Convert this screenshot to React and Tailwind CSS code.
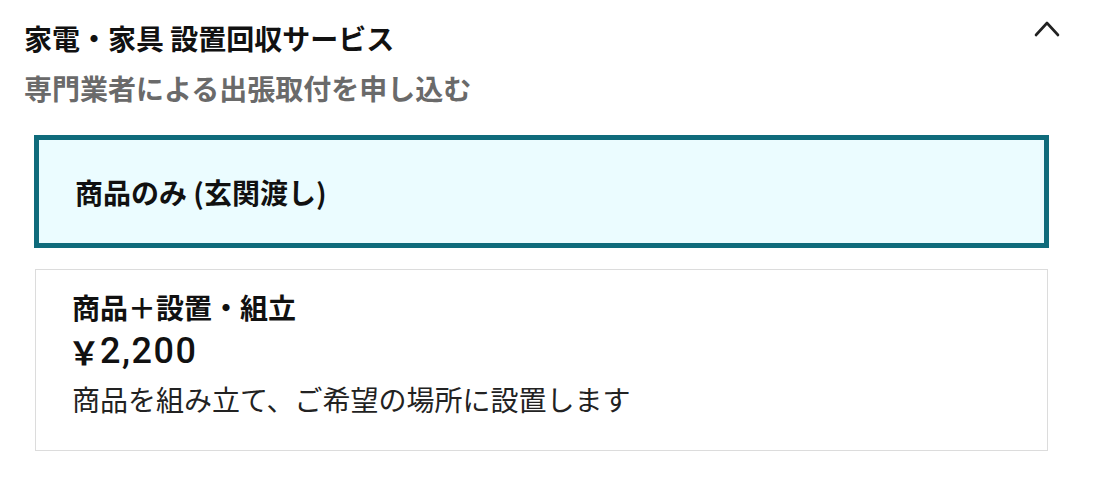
export default function App() {
  const font = { fontFamily: '"Noto Sans CJK JP", "Noto Sans", sans-serif' };

  return (
    <div className="w-[1100px] h-[480px] bg-white overflow-hidden" style={font}>
      {/* Header */}
      <div className="flex items-start justify-between pl-[24px] pr-[40px] pt-[20px]">
        <div>
          <p className="text-[28px] leading-[36px] font-bold text-[#111]">家電・家具 設置回収サービス</p>
          <p className="mt-[14px] text-[28px] leading-[36px] font-bold text-[#6a6a6a]">専門業者による出張取付を申し込む</p>
        </div>
        <svg width="26" height="17" viewBox="0 0 26 17" fill="none" stroke="#222" strokeWidth="2.6" strokeLinecap="round" strokeLinejoin="round">
          <polyline points="2 15 13 3 24 15" />
        </svg>
      </div>

      {/* Options */}
      <div className="mt-[29px] flex flex-col">
        <button className="ml-[34px] w-[1015px] h-[113px] border-[5px] border-[#0f6b7b] bg-[#ebfcff] pl-[36px] flex items-center text-left">
          <span className="text-[28px] leading-[36px] font-bold text-[#111]">商品のみ (玄関渡し)</span>
        </button>

        <button className="mt-[21px] ml-[35px] w-[1013px] h-[182px] border border-[#dcdcdc] bg-white pl-[36px] pt-[19px] flex flex-col items-start text-left">
          <span className="text-[28px] leading-[36px] font-bold text-[#111]">商品＋設置・組立</span>
          <span className="mt-[4px] h-[44px] flex items-center text-[#111]">
            <span className="-ml-[4px] text-[32px] leading-[44px] font-bold">￥</span>
            <span className="text-[36px] leading-[44px] font-medium tracking-[1.5px]" style={{ fontFamily: 'Roboto, "Liberation Sans", sans-serif' }}>2,200</span>
          </span>
          <span className="mt-[8px] text-[28px] leading-[36px] text-[#222]">商品を組み立て、ご希望の場所に設置します</span>
        </button>
      </div>
    </div>
  );
}
